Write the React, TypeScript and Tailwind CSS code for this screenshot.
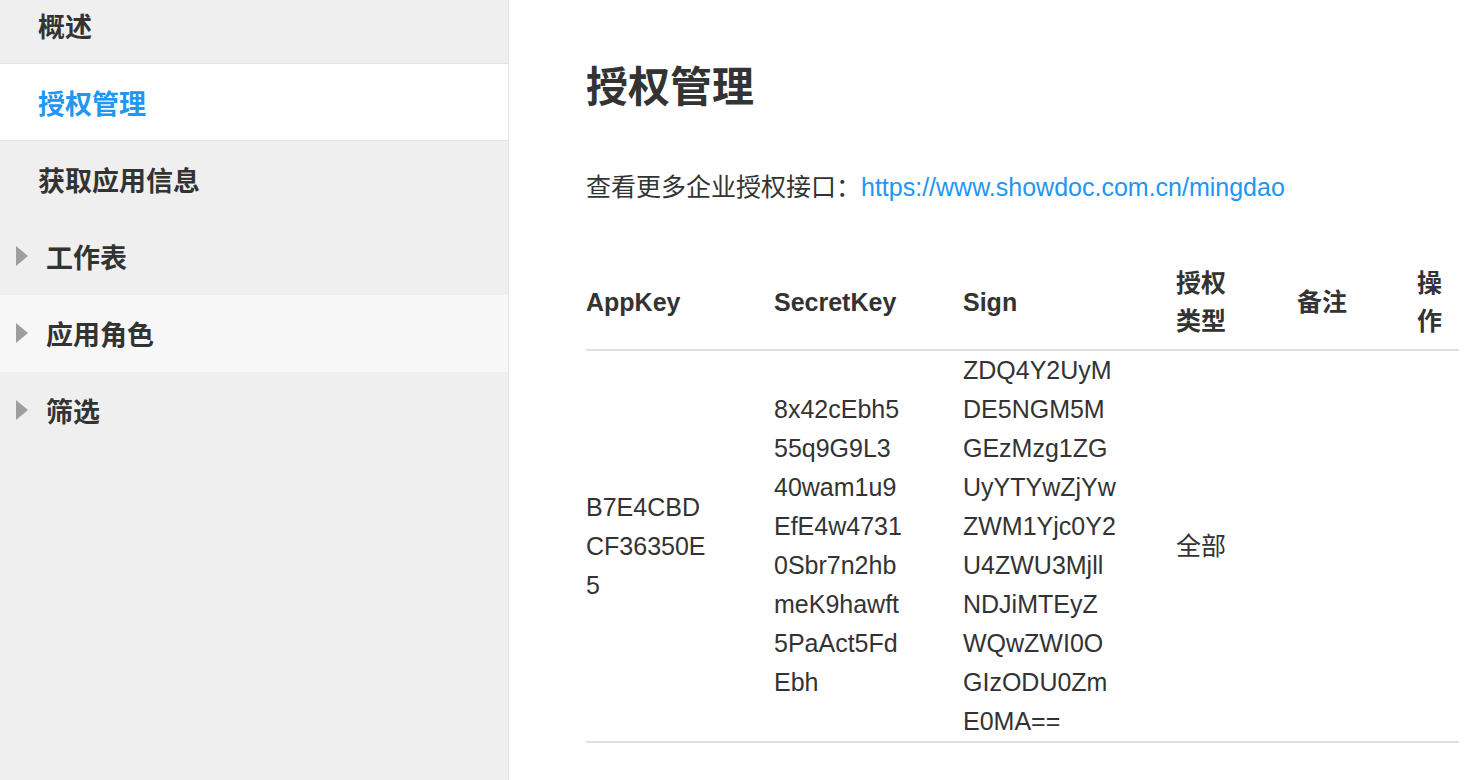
import React from "react";

const font = { fontFamily: '"Liberation Sans", Arial, "Noto Sans CJK SC", sans-serif' };

function Caret() {
  return (
    <svg width="12" height="20" viewBox="0 0 12 20" className="absolute left-[16px] top-1/2 -translate-y-1/2">
      <path d="M0 0 L12 10 L0 20 Z" fill="#9e9e9e" />
    </svg>
  );
}

type Item = { label: string; active?: boolean; caret?: boolean; hover?: boolean };

const items: Item[] = [
  { label: "概述" },
  { label: "授权管理", active: true },
  { label: "获取应用信息" },
  { label: "工作表", caret: true },
  { label: "应用角色", caret: true, hover: true },
  { label: "筛选", caret: true },
];

export default function App() {
  return (
    <div className="flex h-[780px] w-[1476px] overflow-hidden bg-white text-[#333]" style={font}>
      <aside className="w-[509px] shrink-0 bg-[#efefef] border-r border-[#e6e6e6]">
        <ul className="mt-[-13px]">
          {items.map((it, i) => {
            const next = items[i + 1];
            const borderCls = it.active || (next && next.active) ? "border-[#e4e4e4]" : "border-transparent";
            const bg = it.active ? "bg-white" : it.hover ? "bg-[#f7f7f7]" : "";
            return (
              <li
                key={it.label}
                className={`relative flex h-[77px] items-center border-b ${borderCls} ${bg} ${it.caret ? "pl-[46px]" : "pl-[38px]"}`}
              >
                {it.caret && <Caret />}
                <span className={`pt-[6px] text-[27px] font-bold leading-none ${it.active ? "text-[#2196f3]" : "text-[#333]"}`}>
                  {it.label}
                </span>
              </li>
            );
          })}
        </ul>
      </aside>
      <main className="flex-1 pl-[77px] pt-[63px]">
        <h1 className="text-[42px] font-bold leading-[50px] text-[#333]">授权管理</h1>
        <p className="mt-[55px] text-[25px] leading-[39px] text-[#333]">
          查看更多企业授权接口：<a className="text-[#2196f3]">https://www.showdoc.com.cn/mingdao</a>
        </p>
        <table className="mt-[48px] w-[873px] table-fixed border-collapse text-[25px]">
          <colgroup>
            <col className="w-[188px]" />
            <col className="w-[189px]" />
            <col className="w-[213px]" />
            <col className="w-[121px]" />
            <col className="w-[120px]" />
            <col className="w-[42px]" />
          </colgroup>
          <thead>
            <tr className="border-b-2 border-[#e0e0e0]">
              <th className="py-[9px] pr-[63px] text-left align-middle font-bold leading-[38px]">AppKey</th>
              <th className="py-[9px] pr-[60px] text-left align-middle font-bold leading-[38px]">SecretKey</th>
              <th className="py-[9px] pr-[57px] text-left align-middle font-bold leading-[38px]">Sign</th>
              <th className="py-[9px] pr-[61px] text-left align-middle font-bold leading-[38px]">授权类型</th>
              <th className="py-[9px] pr-[60px] text-left align-middle font-bold leading-[38px]">备注</th>
              <th className="py-[9px] text-left align-middle font-bold leading-[38px]">操作</th>
            </tr>
          </thead>
          <tbody>
            <tr className="border-b-2 border-[#e0e0e0]">
              <td className="pr-[63px] align-middle break-all leading-[39px]">B7E4CBDCF36350E5</td>
              <td className="pr-[60px] align-middle break-all leading-[39px]">
                8x42cEbh555q9G9L340wam1u9EfE4w47310Sbr7n2hbmeK9hawft5PaAct5FdEbh
              </td>
              <td className="pr-[57px] align-middle break-all leading-[39px]">
                ZDQ4Y2UyMDE5NGM5MGEzMzg1ZGUyYTYwZjYwZWM1Yjc0Y2U4ZWU3MjllNDJiMTEyZWQwZWI0OGIzODU0ZmE0MA==
              </td>
              <td className="pr-[61px] align-middle leading-[39px]">全部</td>
              <td className="pr-[60px] align-middle leading-[39px]"></td>
              <td className="align-middle leading-[39px]"></td>
            </tr>
          </tbody>
        </table>
      </main>
    </div>
  );
}
